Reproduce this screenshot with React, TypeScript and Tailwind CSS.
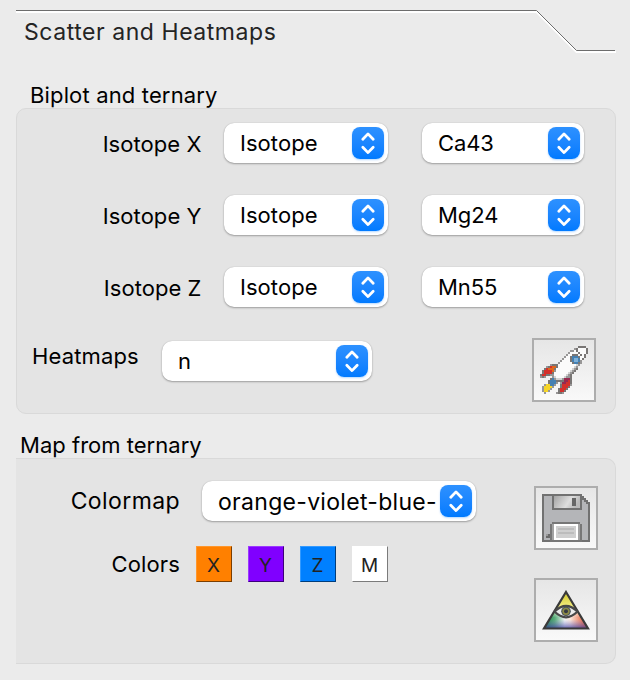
import React from 'react';

const ROCKET = [
  '...................kkkk.',
  '.................gkwwwwk',
  '...............ggwkwwwwk',
  '..............gwwwwkwwwk',
  '.............gwwkkkwkwk.',
  '............gwwkbbbkwwk.',
  '...........gwwwkbccbwk..',
  '..........gwwwwkbccbg...',
  '.........gwwwwwwkbbkg...',
  '.....gkkkwwwwwwwwwlg....',
  '...gkrookwwwwwwwwlg.....',
  '..kroookwwwwwwwwlgk.....',
  '.krrrrogwwwwwwwlgk......',
  '.krrrrkwwwwwwwlgk.......',
  'krrkkggwwwwwwlgk........',
  'gkg...glwwwwlggk........',
  '.....kbglllgmmmk........',
  '....kbbbkkkkmmrk........',
  '....kbbbg.gmmrrk........',
  '..gyybbg..krrrrg........',
  '.gyyyyg...krrrk.........',
  '.gyyyg...krrrk..........',
  '.gyyg....krrk...........',
  '..g.....gkkg............',
];

const PALETTE: Record<string, string> = {
  k: '#797675',
  g: '#989797',
  l: '#d2d2d2',
  w: '#fbfbfb',
  r: '#d3302b',
  o: '#e2661c',
  b: '#4480b2',
  c: '#7db0d8',
  y: '#f5d528',
  m: '#97294f',
};

function RocketIcon() {
  return (
    <svg width="48" height="48" viewBox="0 0 24 24" shapeRendering="crispEdges">
      {ROCKET.flatMap((row, y) =>
        row.split('').map((c, x) =>
          c === '.' ? null : <rect key={`${x}-${y}`} x={x} y={y} width="1" height="1" fill={PALETTE[c]} />,
        ),
      )}
    </svg>
  );
}

function FloppyIcon() {
  return (
    <svg width="48" height="48" viewBox="0 0 24 24" shapeRendering="crispEdges">
      <defs>
        <linearGradient id="shutter" x1="0" y1="0" x2="1" y2="0.3">
          <stop offset="0" stopColor="#a4a4a4" />
          <stop offset="0.65" stopColor="#dedede" />
          <stop offset="1" stopColor="#b8b8b8" />
        </linearGradient>
      </defs>
      <path d="M0 0H20V1H21V2H22V3H23V4H24V24H0Z" fill="#717171" />
      <path d="M1 1H19V2H20V3H21V4H22V5H23V23H1Z" fill="#b4b5b8" />
      <rect x="5" y="0" width="15" height="8" fill="#717171" />
      <rect x="6" y="1" width="13" height="6" fill="url(#shutter)" />
      <rect x="15" y="2" width="2" height="4" fill="#666" />
      <path d="M4 15H5V14H19V15H20V24H4Z" fill="#777" />
      <rect x="5" y="15" width="14" height="8" fill="#a2a2a2" />
      <rect x="6" y="15" width="12" height="8" fill="#fff" />
      <rect x="7" y="16" width="10" height="6" fill="#cfcfcf" />
      <rect x="8" y="17" width="8" height="1" fill="#bcbcbc" />
      <rect x="8" y="19" width="8" height="1" fill="#bcbcbc" />
      <rect x="2" y="20" width="2" height="2" fill="#6a6a6a" />
      <rect x="2" y="20" width="1" height="1" fill="#999" />
    </svg>
  );
}

function TernaryIcon() {
  return (
    <svg width="48" height="40" viewBox="0 0 48 40">
      <defs>
        <linearGradient id="tri" x1="0" y1="0" x2="1" y2="0">
          <stop offset="0.05" stopColor="#168044" />
          <stop offset="0.25" stopColor="#5cae7c" />
          <stop offset="0.47" stopColor="#f0f4f4" />
          <stop offset="0.6" stopColor="#fbe6da" />
          <stop offset="0.95" stopColor="#e2542c" />
        </linearGradient>
        <linearGradient id="triTop" x1="0" y1="0" x2="0" y2="1">
          <stop offset="0.1" stopColor="#d8cf3c" />
          <stop offset="0.4" stopColor="#f3ec80" />
          <stop offset="0.7" stopColor="#fff" stopOpacity="0" />
        </linearGradient>
        <linearGradient id="triLow" x1="0" y1="0" x2="0" y2="1">
          <stop offset="0.75" stopColor="#8d88d8" stopOpacity="0" />
          <stop offset="1" stopColor="#3a3a9c" stopOpacity="0.8" />
        </linearGradient>
      </defs>
      <path d="M24 2L46 38.500H2Z" fill="url(#tri)" />
      <path d="M24 2L46 38.500H2Z" fill="url(#triTop)" />
      <path d="M24 2L46 38.500H2Z" fill="url(#triLow)" stroke="#3a3a3a" strokeWidth="2.200" />
      <path d="M12.500 21.500Q24 10.500 35.500 21.500Q24 33 12.500 21.500Z" fill="#ececec" stroke="#484848" strokeWidth="2.200" />
      <circle cx="24" cy="21.300" r="4.800" fill="#4a5458" />
      <circle cx="24" cy="21.300" r="3.600" fill="#8d8b45" />
      <circle cx="24" cy="21.300" r="2" fill="#353a42" />
    </svg>
  );
}

function Select({ value, className, textClass = '' }: { value: string; className: string; textClass?: string }) {
  return (
    <div
      className={`flex h-10 shrink-0 items-center justify-between rounded-[10px] bg-white pl-4 pr-1 shadow-[0_1px_2px_rgba(0,0,0,0.3),0_0_1px_rgba(0,0,0,0.22)] ${className}`}
    >
      <span className={`whitespace-nowrap ${textClass}`}>{value}</span>
      <span className="flex h-8 w-8 shrink-0 items-center justify-center rounded-lg bg-linear-to-b from-[#2d91ff] to-[#007aff] shadow-[0_1px_2px_rgba(0,122,255,0.3)]">
        <svg width="32" height="32" viewBox="0 0 32 32" fill="none" stroke="#fff" strokeWidth="2.800" strokeLinecap="round" strokeLinejoin="round">
          <path d="M10.800 12.300L16 6.900L21.200 12.300M10.800 20.200L16 25.600L21.200 20.200" />
        </svg>
      </span>
    </div>
  );
}

function IconButton({ children }: { children: React.ReactNode }) {
  return (
    <button className="flex h-16 w-16 shrink-0 items-center justify-center border-2 border-[#adadad] bg-linear-to-b from-[#e6e6e6] to-[#f9f9f9]">
      {children}
    </button>
  );
}

function IsotopeRow({ axis, value }: { axis: string; value: string }) {
  return (
    <div className="flex h-10 items-center tracking-[0.05px]">
      <span className="w-[184.500px] pt-0.5 text-right">Isotope {axis}</span>
      <Select value="Isotope" className="ml-[22.500px] w-[164px]" />
      <Select value={value} className="ml-[34px] w-[162px] tracking-[-0.1px]" />
    </div>
  );
}

const SWATCHES = [
  { name: 'X', style: 'bg-[#ff8000] border-t-[#ff962b] border-l-[#ff962b] border-r-[#7b3e00] border-b-[#7b3e00]' },
  { name: 'Y', style: 'bg-[#8000ff] border-t-[#9c38ff] border-l-[#9c38ff] border-r-[#3d007b] border-b-[#3d007b]' },
  { name: 'Z', style: 'bg-[#0080ff] border-t-[#339aff] border-l-[#339aff] border-r-[#003d7b] border-b-[#003d7b]' },
  { name: 'M', style: 'bg-white border-t-white border-l-white border-r-[#7b7b7b] border-b-[#7b7b7b]' },
];

export default function App() {
  return (
    <main className="relative h-[680px] w-[630px] overflow-hidden bg-[#ebebeb] pl-4 font-['Inter',sans-serif] text-[22px] leading-7 tracking-[0.15px] text-black">
      <svg className="absolute left-4 top-0" width="600" height="56" fill="none">
        <path d="M0 12H520.500L560.500 52H600" stroke="#fff" strokeWidth="2" />
        <path d="M0 10.500H520.500L560.500 50.500H599" stroke="#6d6d6d" strokeWidth="1" />
      </svg>
      <h1 className="h-[81px] pl-2 pt-[18px] text-[23px] tracking-[0.55px] text-[#242424]">Scatter and Heatmaps</h1>
      <h2 className="h-[27px] pl-[14px]">Biplot and ternary</h2>
      <section className="h-[306px] w-[600px] rounded-[10px] border border-[#d9d9d9] bg-[#e4e4e4] pt-[14px]">
        <div className="flex flex-col gap-8">
          <IsotopeRow axis="X" value="Ca43" />
          <IsotopeRow axis="Y" value="Mg24" />
          <IsotopeRow axis="Z" value="Mn55" />
        </div>
        <div className="mt-[31px] flex items-start pl-[15px]">
          <span className="w-[130px] pt-1">Heatmaps</span>
          <Select value="n" className="mt-[3px] w-[210px]" />
          <div className="ml-40">
            <IconButton>
              <RocketIcon />
            </IconButton>
          </div>
        </div>
      </section>
      <h2 className="h-11 pl-1 pt-[17px] tracking-[0.02px]">Map from ternary</h2>
      <section className="flex h-[206px] w-[600px] rounded-r-[10px] border border-l-0 border-[#d9d9d9] bg-[#e4e4e4]">
        <div className="w-[518px] pt-[22px]">
          <div className="flex h-10 items-center text-[23px] tracking-[0.4px]">
            <span className="w-[164px] text-right">Colormap</span>
            <Select value="orange-violet-blue-" className="ml-[22px] w-[274px] tracking-[0.3px]" textClass="pt-0.5" />
          </div>
          <div className="mt-[25px] flex h-9 items-center">
            <span className="w-[164px] text-right">Colors</span>
            <div className="ml-4 flex gap-4">
              {SWATCHES.map((s) => (
                <button
                  key={s.name}
                  className={`flex h-9 w-9 items-center justify-center border pr-px pt-[3px] text-[19px] tracking-normal text-[#222] ${s.style}`}
                >
                  {s.name}
                </button>
              ))}
            </div>
          </div>
        </div>
        <div className="flex flex-col gap-7 pt-[27px]">
          <IconButton>
            <FloppyIcon />
          </IconButton>
          <IconButton>
            <TernaryIcon />
          </IconButton>
        </div>
      </section>
    </main>
  );
}
